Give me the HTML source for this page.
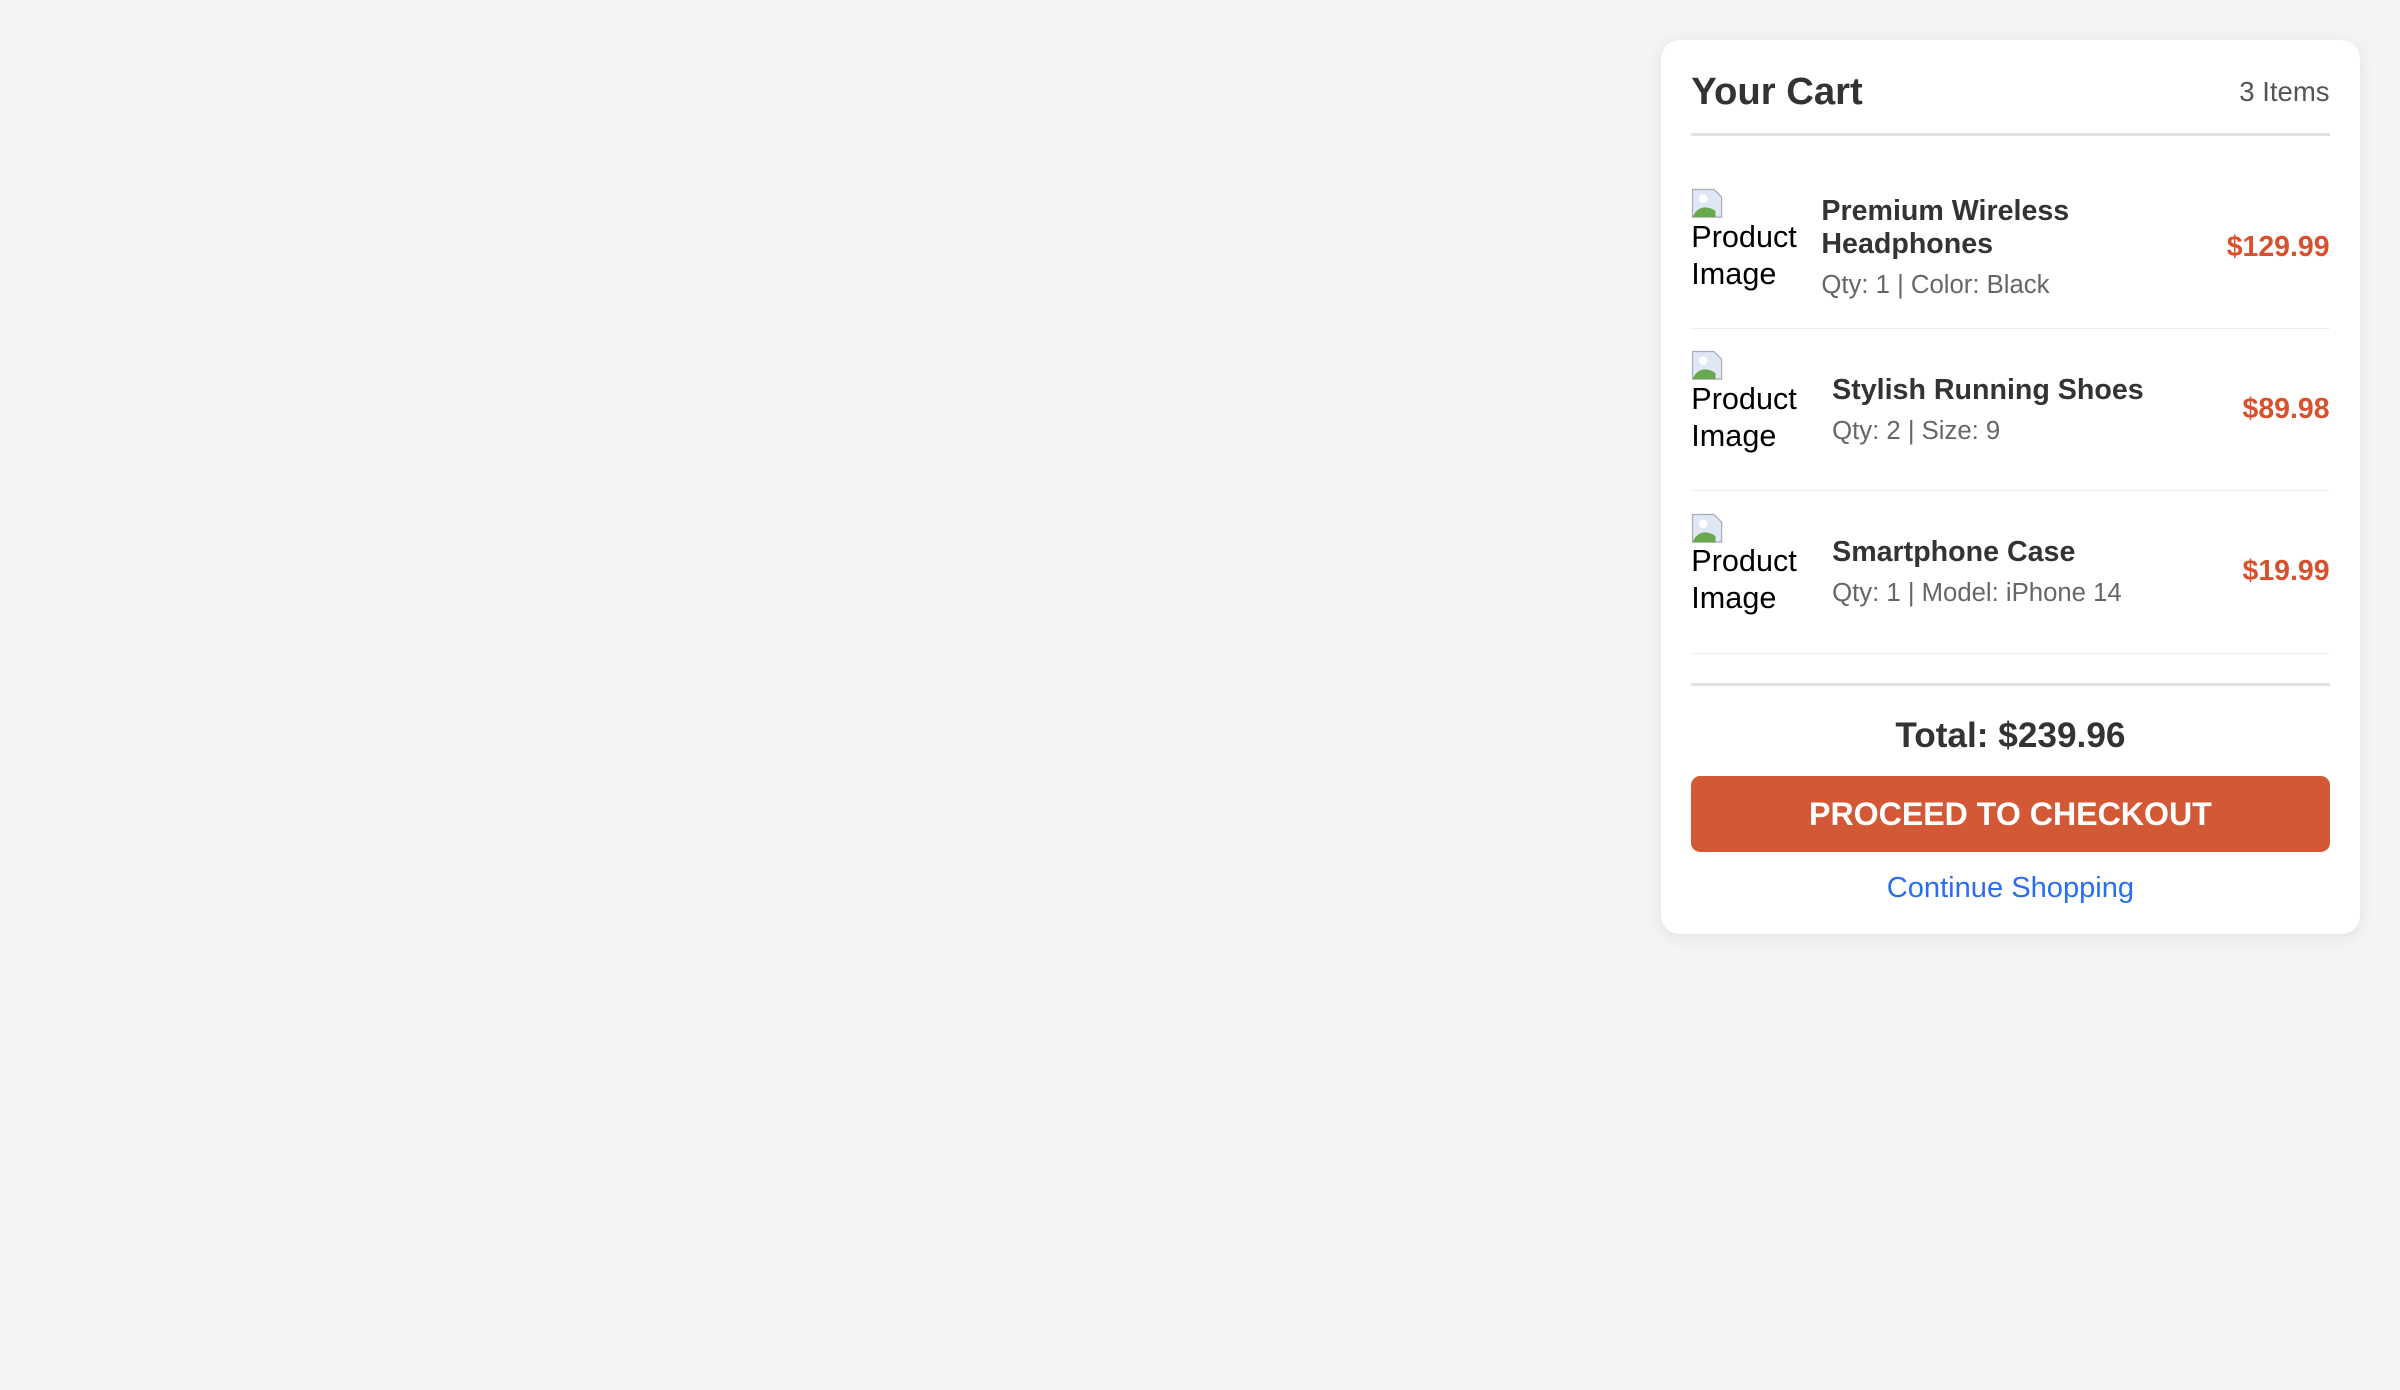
<!DOCTYPE html>
<html><head><meta charset="utf-8">
<style>
html{zoom:1.5306}
body{margin:0;background:#f4f4f4;font-family:"Liberation Sans",Arial,sans-serif;width:1568px;height:908px;position:relative;overflow:hidden}
.card{position:absolute;left:1085px;top:26px;width:417px;height:544px;padding:20px;background:#fff;border-radius:12px;box-shadow:0 2px 10px rgba(0,0,0,0.08)}
.hdr{display:flex;justify-content:space-between;align-items:center;height:43px;border-bottom:2px solid #e2e2e2;box-sizing:border-box;padding-bottom:13px}
.hdr h2{margin:0;font-size:25px;color:#333;font-weight:bold}
.hdr span{font-size:18px;color:#555}
.items{margin-top:20px}
.row{display:flex;align-items:center;height:106px;border-bottom:1px solid #eee;box-sizing:border-box}
.img{font-size:20px;line-height:24px;color:#000;flex:none;align-self:flex-start;margin-top:14px}
.ic{display:block;width:22px;height:20px;margin-bottom:0}
.info{flex:1}
.name{font-size:18.7px;font-weight:bold;color:#333;line-height:22px}
.meta{font-size:16.8px;color:#666;margin-top:6px}
.price{font-size:18.6px;font-weight:bold;color:#d9502c}
.tot{border-top:2px solid #e2e2e2;margin-top:19px;text-align:center;font-size:23px;font-weight:bold;color:#333;padding-top:20px;line-height:26px}
.btn{margin-top:13px;height:50px;background:#d35836;border-radius:6px;color:#fff;font-size:21px;font-weight:bold;display:flex;align-items:center;justify-content:center}
.link{text-align:center;color:#2a6ef0;font-size:19px;margin-top:13px}
</style></head><body>
<div class="card">
<div class="hdr"><h2>Your Cart</h2><span>3 Items</span></div>
<div class="items">
<div class="row"><div class="img" style="width:85px"><svg class="ic" viewBox="0 0 22 20"><path d="M1 1h14l5 5v13H1z" fill="#dfe7f5" stroke="#aab" stroke-width="0.8"/><path d="M1 19c3-7 9-8 15-4v4z" fill="#6aa84f"/><circle cx="8" cy="7" r="2.8" fill="#fff"/></svg>Product<br>Image</div>
<div class="info"><div class="name">Premium Wireless<br>Headphones</div><div class="meta">Qty: 1 | Color: Black</div></div><div class="price">$129.99</div></div>
<div class="row"><div class="img" style="width:92px"><svg class="ic" viewBox="0 0 22 20"><path d="M1 1h14l5 5v13H1z" fill="#dfe7f5" stroke="#aab" stroke-width="0.8"/><path d="M1 19c3-7 9-8 15-4v4z" fill="#6aa84f"/><circle cx="8" cy="7" r="2.8" fill="#fff"/></svg>Product<br>Image</div>
<div class="info"><div class="name">Stylish Running Shoes</div><div class="meta">Qty: 2 | Size: 9</div></div><div class="price">$89.98</div></div>
<div class="row"><div class="img" style="width:92px"><svg class="ic" viewBox="0 0 22 20"><path d="M1 1h14l5 5v13H1z" fill="#dfe7f5" stroke="#aab" stroke-width="0.8"/><path d="M1 19c3-7 9-8 15-4v4z" fill="#6aa84f"/><circle cx="8" cy="7" r="2.8" fill="#fff"/></svg>Product<br>Image</div>
<div class="info"><div class="name">Smartphone Case</div><div class="meta">Qty: 1 | Model: iPhone 14</div></div><div class="price">$19.99</div></div>
</div>
<div class="tot">Total: $239.96</div>
<div class="btn">PROCEED TO CHECKOUT</div>
<div class="link">Continue Shopping</div>
</div>
</body></html>
